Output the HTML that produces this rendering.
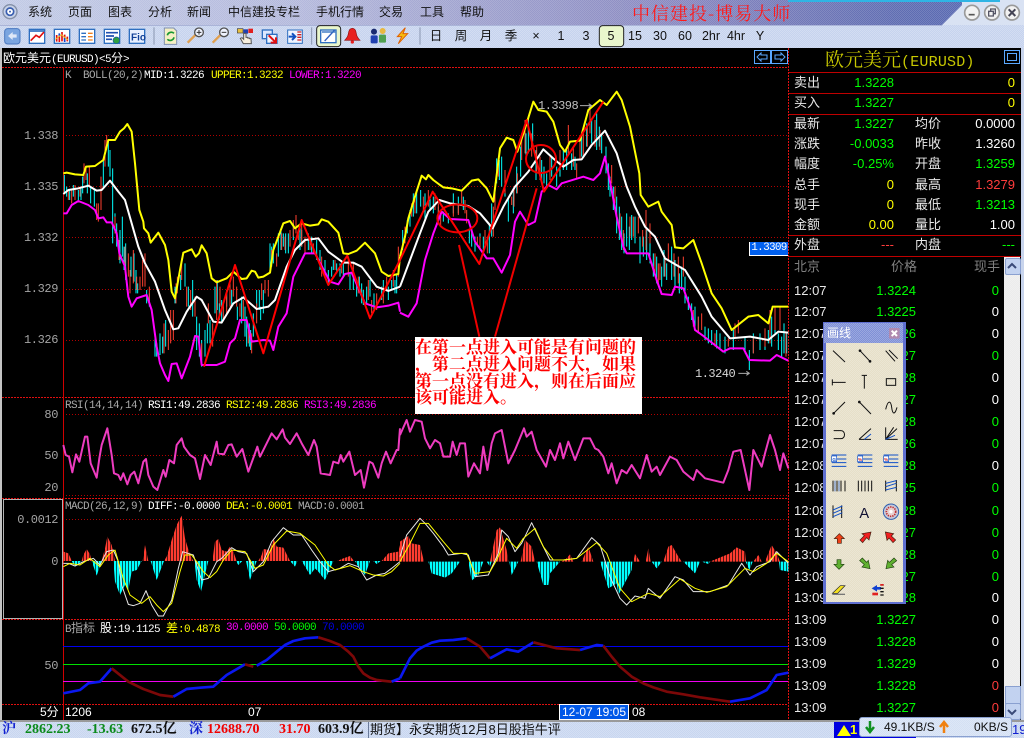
<!DOCTYPE html>
<html><head><meta charset="utf-8"><title>博易大师</title>
<style>
html,body{margin:0;padding:0;background:#000;}
#p{position:relative;width:1024px;height:738px;overflow:hidden;background:#000;font-family:"Liberation Sans","WenQuanYi Zen Hei","Noto Sans CJK SC",sans-serif;}
.a{position:absolute;}
.t{position:absolute;white-space:nowrap;line-height:14px;height:14px;}
.dots{background-image:conic-gradient(rgba(255,255,255,.22) 25%,transparent 0 50%,rgba(255,255,255,.22) 0 75%,transparent 0);background-size:2px 2px;}
.m{font-size:12px;color:#111;}
.tb{font-size:12.5px;color:#111;transform:translateX(-50%);top:29px;}
.l{font-family:"Liberation Mono","WenQuanYi Zen Hei","Noto Sans CJK SC",monospace;font-size:11px;letter-spacing:-.6px;}
.c{font-family:"WenQuanYi Zen Hei","Noto Sans CJK SC",sans-serif;font-size:12px;letter-spacing:0;}
.ax{font-family:"Liberation Mono",monospace;font-size:12px;letter-spacing:-.4px;color:#a4a4a4;text-align:right;width:56px;left:2px;}
.w{color:#fff}.y{color:#ff0}.g{color:#0f0}.pk{color:#f0f}.gr{color:#a8a8a8}.r{color:#ff3c3c}
.f{font-size:13px;color:#e8e8e8;}
.v{font-size:13px;text-align:right;width:70px;}
.st{font-family:"Liberation Serif","Noto Serif CJK SC",serif;font-weight:bold;font-size:14px;top:723px;}
.n{position:absolute;left:415px;white-space:nowrap;color:#ff0000;font-family:"Noto Serif CJK SC",serif;font-weight:bold;font-size:17px;line-height:17px;height:17px;}
</style></head><body><div id="p">

<!-- title bar -->
<div class="a" style="left:0;top:0;width:1024px;height:25px;background:#d9e2f3"></div>
<div class="a dots" style="left:0;top:0;width:962px;height:25px;clip-path:polygon(0 0,100% 0,100% 5px,942px 100%,0 100%);background-color:#8a8fc4;background-image:conic-gradient(rgba(255,255,255,.14) 25%,transparent 0 50%,rgba(255,255,255,.14) 0 75%,transparent 0),linear-gradient(90deg,#c2cbe6 0,#b4b9dc 300px,#9a9ccb 520px,#8686bf 700px,#5f6db2 900px,#5a6ab2 962px);background-size:2px 2px,100% 100%;"></div>
<div class="a" style="left:788px;top:0;width:212px;height:2px;background:#2fb4e4"></div>
<!-- toolbar -->
<div class="a dots" style="left:0;top:25px;width:1024px;height:23px;background-color:#c6d3ee"></div>
<div class="a" style="left:0;top:25px;width:942px;height:1px;background:#aab4d8"></div>

<div class="t m" style="left:28px;top:5px">系统</div>
<div class="t m" style="left:68px;top:5px">页面</div>
<div class="t m" style="left:108px;top:5px">图表</div>
<div class="t m" style="left:148px;top:5px">分析</div>
<div class="t m" style="left:187px;top:5px">新闻</div>
<div class="t m" style="left:228px;top:5px">中信建投专栏</div>
<div class="t m" style="left:316px;top:5px">手机行情</div>
<div class="t m" style="left:379px;top:5px">交易</div>
<div class="t m" style="left:420px;top:5px">工具</div>
<div class="t m" style="left:460px;top:5px">帮助</div>
<div class="t" style="left:632px;top:3px;height:20px;line-height:20px;font-family:'Noto Serif CJK SC',serif;font-size:18px;letter-spacing:1px;color:#ff1a1a">中信建投-博易大师</div>

<svg class="a" style="left:0;top:0" width="1024" height="48" viewBox="0 0 3072 144">
 <circle cx="30" cy="35" r="21" fill="#c8d2e8" stroke="#8490a8" stroke-width="4"/><circle cx="30" cy="35" r="11" fill="#fff" stroke="#3a5fb0" stroke-width="5"/><circle cx="30" cy="35" r="3" fill="#3a5fb0"/>
 <!-- window buttons -->
 <g fill="#f2f2f2" stroke="#9a9a9a" stroke-width="5"><circle cx="2916" cy="38" r="22"/><circle cx="2976" cy="38" r="22"/><circle cx="3036" cy="38" r="22"/></g>
 <path d="M2906 44h18" stroke="#555" stroke-width="5"/><path d="M2966 34h14v14h-14zM2972 34v-7h14v14h-6" fill="none" stroke="#556" stroke-width="4"/><path d="M3026 28l20 20M3046 28l-20 20" stroke="#445" stroke-width="6"/>
 <!-- icon 1 -->
 <rect x="14" y="86" width="46" height="46" rx="9" fill="#7aa5e0" stroke="#4a78c0" stroke-width="3"/><path d="M24 108l14-12v7h12v10H38v7z" fill="#dfe8f7"/>
 <!-- icon 2 -->
 <rect x="88" y="88" width="46" height="42" fill="#fff" stroke="#2e6fc0" stroke-width="4"/><path d="M88 93h46" stroke="#2e6fc0" stroke-width="5"/><path d="M92 122l16-16 10 6 14-16" fill="none" stroke="#e01010" stroke-width="5"/>
 <!-- icon 3 -->
 <rect x="163" y="88" width="46" height="42" fill="#fff" stroke="#2e6fc0" stroke-width="4"/><path d="M170 105v20M178 110v16M186 96v28M194 104v18M202 110v14" stroke="#e01010" stroke-width="5"/><path d="M178 100v10M194 112v14" stroke="#1040d0" stroke-width="5"/><path d="M166 118l18-14 20 16" fill="none" stroke="#f0c020" stroke-width="3"/>
 <!-- icon 4 -->
 <rect x="238" y="88" width="46" height="42" fill="#fff" stroke="#2e6fc0" stroke-width="4"/><path d="M244 100h14M244 110h14M244 120h14" stroke="#2e6fc0" stroke-width="4"/><path d="M264 100h14M264 110h14M264 120h14" stroke="#f08020" stroke-width="4"/>
 <!-- icon 5 -->
 <rect x="313" y="88" width="46" height="42" fill="#fff" stroke="#2e6fc0" stroke-width="4"/><path d="M318 98h36M318 108h24M318 118h18" stroke="#2050b0" stroke-width="5"/><circle cx="349" cy="121" r="10" fill="#30a040" stroke="#1a5aa0" stroke-width="2"/>
 <!-- icon 6 -->
 <rect x="388" y="88" width="46" height="42" fill="#e8f0ff" stroke="#2e6fc0" stroke-width="4"/><text x="393" y="122" font-family="Liberation Sans" font-weight="bold" font-size="30" fill="#104098">Fio</text>
 <path d="M462 82v52M935 82v52M1260 82v52" stroke="#8a96b0" stroke-width="3"/>
 <!-- icon 7 -->
 <path d="M493 84h28l9 9v40h-37z" fill="#f4efc4" stroke="#8090b0" stroke-width="3"/><path d="M502 106a12 12 0 0 1 20-6M522 112a12 12 0 0 1-20 6" fill="none" stroke="#189830" stroke-width="5"/>
 <!-- icon 8,9 -->
 <path d="M563 128l24-24" stroke="#e0a050" stroke-width="7"/><circle cx="597" cy="97" r="13" fill="#f0f4ff" stroke="#505050" stroke-width="4"/><path d="M590 97h14M597 90v14" stroke="#333" stroke-width="3"/>
 <path d="M638 128l24-24" stroke="#e0a050" stroke-width="7"/><circle cx="672" cy="97" r="13" fill="#f0f4ff" stroke="#505050" stroke-width="4"/><path d="M665 97h14" stroke="#333" stroke-width="3"/>
 <!-- icon 10 -->
 <rect x="712" y="86" width="17" height="13" fill="#e8c040" stroke="#444" stroke-width="2"/><rect x="730" y="88" width="14" height="13" fill="#2040b0"/><rect x="745" y="86" width="14" height="13" fill="#e02020"/>
 <path d="M730 131l-9-16 5-2 5 5v-18h7v12h5v2h5v2h5l1 15z" fill="#f8f0e0" stroke="#555" stroke-width="3"/>
 <!-- icon 11 -->
 <rect x="787" y="90" width="30" height="26" fill="#dce8ff" stroke="#2e6fc0" stroke-width="4"/><rect x="800" y="103" width="31" height="27" fill="#eef4ff" stroke="#2e6fc0" stroke-width="4"/><path d="M806 106l22 22M828 112v16h-16" fill="none" stroke="#e01010" stroke-width="6"/>
 <!-- icon 12 -->
 <rect x="863" y="90" width="44" height="40" fill="#eef4ff" stroke="#2e6fc0" stroke-width="3"/><path d="M866 110h16M876 100l10 10-10 10" fill="none" stroke="#1050c0" stroke-width="6"/><path d="M892 96h12M892 104h12M892 112h12M892 120h12" stroke="#d02020" stroke-width="4"/>
 <!-- icon 13 -->
 <rect x="950" y="77" width="72" height="63" rx="10" fill="#e9f6cc" stroke="#222" stroke-width="3"/><rect x="962" y="90" width="46" height="38" fill="#fff" stroke="#2e6fc0" stroke-width="4"/><path d="M974 123l30-33" stroke="#3060c0" stroke-width="4"/><path d="M966 96h40" stroke="#2e6fc0" stroke-width="4"/>
 <!-- icon 14 -->
 <path d="M1057 85c9 0 11 8 12 16 1 10 6 14 11 20h-46c5-6 10-10 11-20 1-8 3-16 12-16z" fill="#e82020" stroke="#901010" stroke-width="2"/><circle cx="1057" cy="126" r="5" fill="#e82020"/>
 <!-- icon 15 -->
 <circle cx="1122" cy="95" r="9" fill="#1a2a70"/><circle cx="1148" cy="93" r="9" fill="#e8b840"/><rect x="1112" y="106" width="21" height="24" rx="4" fill="#2040b0"/><rect x="1137" y="104" width="21" height="24" rx="4" fill="#50a050"/>
 <!-- icon 16 -->
 <path d="M1216 83l-24 27h13l-10 21 28-30h-14z" fill="#f6bc10" stroke="#e06000" stroke-width="3"/>
 <!-- selected 5 -->
 <rect x="1798" y="77" width="73" height="63" rx="10" fill="#e9f6cc" stroke="#222" stroke-width="3"/>
</svg>

<div class="t tb" style="left:436px">日</div><div class="t tb" style="left:461px">周</div><div class="t tb" style="left:486px">月</div><div class="t tb" style="left:511px">季</div><div class="t tb" style="left:536px">×</div><div class="t tb" style="left:561px">1</div><div class="t tb" style="left:586px">3</div><div class="t tb" style="left:611px">5</div><div class="t tb" style="left:635px">15</div><div class="t tb" style="left:660px">30</div><div class="t tb" style="left:685px">60</div><div class="t tb" style="left:711px">2hr</div><div class="t tb" style="left:736px">4hr</div><div class="t tb" style="left:760px">Y</div>

<!-- chart svg -->
<svg class="a" style="left:0;top:48px" width="1024" height="690" viewBox="0 48 1024 690">
<defs>
 <pattern id="pr" patternUnits="userSpaceOnUse" width="9" height="9"><rect width="7" height="9" fill="#ff3c30"/></pattern>
 <pattern id="pc" patternUnits="userSpaceOnUse" width="9" height="9"><rect width="7" height="9" fill="#00ffff"/></pattern>
</defs>
<rect x="0" y="48" width="2" height="674" fill="#c4c4c4"/>
<!-- grid -->
<g stroke="#b00000" stroke-dasharray="1 2" fill="none">
 <path d="M63 135.5H788M63 186.5H788M63 237.5H788M63 289.5H788M63 340.5H788M63 414.5H788M63 455.5H788M63 495.5H788M63 519.5H788"/>
</g>
<g stroke="#e01010" stroke-dasharray="2 1" fill="none">
 <path d="M2 67.5H788M2 397.5H788M2 498.5H788M2 619.5H788M2 704.5H788"/>
 <path d="M788.5 48V720" stroke-dasharray="2 1"/>
 <path d="M63.5 67V720" stroke-dasharray="none" stroke="#d00000"/>
 <path d="M789 72.5H1022M789 93.5H1022M789 114.5H1022M789 235.5H1022M789 256.5H1022" stroke-dasharray="none" stroke="#c00000"/>
</g>
<rect x="3.5" y="499.5" width="59" height="119" fill="none" stroke="#b4b4b4"/>
<!-- arrows buttons -->
<g fill="none" stroke="#5aa8ff"><rect x="754.5" y="50.5" width="16" height="13"/><rect x="771.5" y="50.5" width="16" height="13"/><rect x="1004.5" y="50.5" width="15" height="13"/><rect x="1007.5" y="53.5" width="9" height="7"/><path d="M757 57l4-4v2h6v4h-6v2zM785 57l-4-4v2h-6v4h6v2z"/></g>

<!-- MAIN left half -->
<g transform="translate(0,90) scale(.33333)" fill="none" stroke-linejoin="round">
 <path stroke="#00ffff" stroke-width="3" d="M193 255V310M209 300V330M220 285V320M235 300V330M248 260V310M272 290V340M310 205V290M330 180V260M338 235V460M345 370V430M367 380V500M377 460V570M393 500V560M402 490V575M413 580V610M440 600V640M465 730V800M480 730V795M497 690V770M525 590V640M542 555V600M578 570V680M590 680V780M605 750V830M615 720V800M630 690V760M652 570V660M665 630V700M680 600V650M712 650V690M735 650V740M748 700V770M760 670V740M770 600V650M782 650V690M810 460V540M820 460V520M843 420V480M857 430V490M905 420V470M925 430V480M950 450V510M975 510V560M985 540V580M1000 510V540M1020 520V560M1060 540V600M1078 560V600M1090 600V645M1110 570V620M1145 590V630M1175 570V600M1190 550V610M200 290V320M243 290V330M262 250V310M283 300V350M325 150V230M350 400V470M360 420V520M372 470V540M408 540V610M448 610V650M470 760V800M488 740V790M555 520V590M565 590V650M598 700V800M622 700V760M645 590V670M658 640V690M695 600V650M725 620V700M740 680V770M752 720V780M778 600V660M790 600V670M815 470V530M835 430V500M850 430V470M865 430V490M880 400V450M900 410V480M935 440V490M960 480V540M995 530V560M1010 520V550M1030 520V560M1050 550V600M1070 570V620M1085 580V640M1100 590V640M1122 610V660M1150 570V620M1165 590V630M1185 570V610"/>
 <path stroke="#ff4030" stroke-width="3" d="M215 300V340M225 285V330M252 220V280M258 230V270M295 340V395M315 150V230M320 135V180M345 380V430M357 450V510M385 490V560M400 480V580M420 560V600M435 490V590M492 700V790M505 720V780M520 660V750M532 560V610M545 505V570M572 600V660M605 760V810M638 700V770M650 570V690M670 640V690M690 570V650M700 560V620M720 640V680M745 720V760M770 640V700M795 570V610M805 570V620M830 490V530M855 440V480M888 375V430M895 420V450M915 440V490M940 460V490M1005 510V540M1045 500V560M1105 570V630M1130 610V660M1160 560V600M1195 470V560M205 300V330M240 290V320M268 230V290M290 340V390M303 260V360M375 470V530M390 540V610M410 560V600M428 510V590M448 590V640M512 660V760M528 580V640M560 590V650M585 620V680M625 640V700M660 590V650M680 610V670M710 590V650M730 630V690M755 730V790M785 580V630M815 480V520M845 430V480M870 420V470M880 390V440M905 400V470M930 440V480M965 500V560M1025 510V550M1060 520V560M1075 560V610M1115 630V670M1150 590V640M1180 540V590"/>
 <polyline stroke="#ffff00" stroke-width="6" points="190,250 200,248 225,253 250,255 258,230 285,228 310,210 325,150 345,150 360,125 372,115 382,102 395,125 405,220 418,360 430,395 432,415 445,430 452,458 475,428 495,465 505,510 515,605 525,625 540,540 550,488 575,478 587,500 597,490 605,466 620,490 635,565 650,577 680,565 700,545 725,567 740,565 755,542 765,545 775,563 790,560 810,548 820,480 850,400 870,393 885,415 905,400 930,407 955,403 965,388 985,395 1015,428 1030,490 1045,492 1070,482 1095,458 1125,490 1145,545 1165,558 1195,552 1200,500"/>
 <polyline stroke="#ff00ff" stroke-width="6" points="190,370 200,370 215,345 235,333 265,345 285,360 295,385 310,382 320,397 335,397 350,430 358,490 375,530 385,620 395,650 410,625 440,615 455,660 470,770 480,820 495,855 505,873 515,822 530,820 545,865 570,800 585,738 595,740 605,825 650,825 675,815 690,760 705,745 720,690 740,690 755,755 790,750 810,752 820,780 835,710 860,670 880,560 915,490 945,490 990,575 1015,583 1035,552 1055,548 1095,640 1130,652 1165,647 1195,638 1200,665"/>
 <polyline stroke="#ffffff" stroke-width="6" points="190,312 205,300 235,295 265,287 290,302 305,300 330,272 355,305 375,330 395,400 415,470 435,520 465,575 495,660 520,718 535,715 560,665 590,620 605,630 640,695 665,698 700,640 730,622 770,657 805,650 825,630 860,530 885,480 915,450 955,445 985,485 1030,518 1060,518 1085,530 1130,590 1165,603 1200,590"/>
 <polyline stroke="#ff0000" stroke-width="6" points="612,830 705,525 790,790 905,390 985,585 1042,497 1110,685 1200,510"/>
</g>
<!-- MAIN right half -->
<g transform="translate(400,90) scale(.33333)" fill="none" stroke-linejoin="round">
 <path stroke="#00ffff" stroke-width="3" d="M8 420V480M30 360V410M50 300V370M62 300V350M75 310V390M100 320V370M130 365V395M145 370V400M160 310V370M190 320V360M208 420V460M225 440V485M250 440V495M268 400V490M290 205V280M305 200V290M325 320V395M350 230V310M385 80V190M398 100V155M425 210V270M440 250V290M470 230V290M490 175V240M515 190V240M560 100V170M590 70V180M605 130V190M618 170V250M630 260V320M650 320V430M665 380V480M680 370V470M695 375V450M720 440V520M740 420V510M770 500V580M800 520V570M815 470V570M845 530V600M865 620V660M885 650V710M915 710V750M935 720V765M960 730V780M1035 740V790M1048 780V840M1080 730V780M1115 680V770M1125 690V730M1145 740V800M1160 730V790M22 390V430M40 310V380M90 320V360M115 350V390M175 320V370M215 410V470M240 430V480M275 340V440M298 210V270M315 250V320M340 300V370M362 170V260M378 130V200M408 180V270M432 230V280M455 200V260M480 190V260M500 180V240M525 200V240M545 140V200M575 90V160M598 110V170M625 220V300M640 290V360M658 350V450M672 430V490M688 410V480M705 380V460M730 440V500M750 440V520M760 490V560M785 530V590M792 480V560M825 510V590M838 550V610M855 560V640M875 640V690M895 680V730M925 715V760M950 720V775M975 740V790M1000 720V780M1060 730V790M1095 730V780M1105 720V760M1135 730V780M1152 700V790"/>
 <path stroke="#ff4030" stroke-width="3" d="M15 410V460M45 310V370M85 300V350M105 310V360M122 370V410M160 340V380M175 345V375M185 305V340M195 330V370M240 440V480M262 440V490M280 350V440M295 215V260M315 240V310M335 320V345M352 250V310M375 90V190M410 170V250M450 200V270M505 105V190M530 220V265M550 130V200M570 50V130M585 90V170M635 225V280M670 420V480M690 380V440M715 380V430M738 360V480M765 490V560M780 520V570M805 460V515M835 500V580M905 670V720M985 745V770M1015 690V730M1095 715V770M1110 660V760M1140 650V720M35 340V380M70 320V360M115 340V380M200 360V400M232 440V470M255 420V470M285 280V360M342 290V350M365 130V210M395 130V200M420 200V270M480 180V240M520 170V230M540 150V210M562 110V170M600 120V180M645 290V340M660 370V430M700 380V440M728 420V470M750 400V460M775 520V580M795 500V560M822 490V560M850 500V560M880 660V710M895 680V730M945 730V770M1005 700V745M1060 745V790M1125 650V720M1158 730V800"/>
 <polyline stroke="#ffff00" stroke-width="6" points="0,500 15,440 25,385 48,310 65,257 78,268 85,255 100,270 120,285 130,292 155,295 185,302 215,272 235,268 260,295 280,335 300,175 320,143 340,150 352,185 372,125 400,35 415,60 440,65 460,95 480,165 495,185 510,155 540,152 565,60 600,30 620,45 650,5 665,30 690,110 718,250 722,315 745,350 775,335 785,365 815,405 825,472 850,475 880,450 905,520 935,610 965,655 995,720 1045,680 1075,675 1105,700 1118,650 1165,650"/>
 <polyline stroke="#ff00ff" stroke-width="6" points="0,668 25,680 50,640 75,510 100,430 125,365 150,387 205,390 225,455 260,505 280,505 305,548 330,495 345,395 360,365 385,405 405,395 425,305 445,285 470,298 485,280 550,260 580,270 600,250 615,200 630,275 650,380 670,470 680,490 745,490 770,570 785,612 815,615 825,590 850,595 875,665 885,720 910,738 970,785 990,775 1030,775 1048,810 1110,812 1130,795 1165,812"/>
 <polyline stroke="#ffffff" stroke-width="6" points="0,590 30,510 60,430 85,365 118,330 150,340 205,348 240,370 278,415 310,350 345,290 385,245 430,178 465,210 490,230 520,210 545,208 575,165 615,122 650,190 680,290 705,350 735,410 765,440 795,505 855,540 905,620 935,680 990,745 1050,740 1105,750 1135,725 1165,728"/>
 <polyline stroke="#ff0000" stroke-width="6" points="0,510 98,305 238,522 380,90 432,305 610,35"/>
 <ellipse cx="172" cy="385" rx="60" ry="42" stroke="#f00000" stroke-width="6"/>
 <ellipse cx="423" cy="207" rx="45" ry="42" stroke="#f00000" stroke-width="6"/>
 <path d="M177 465L238 740M410 295L285 740" stroke="#f00000" stroke-width="6"/>
 <path d="M540 47H575M566 41l9 6-9 6M1015 850H1048M1039 844l9 6-9 6" stroke="#aaa" stroke-width="3"/>
</g>
<!-- RSI -->
<g transform="translate(0,395) scale(.33333)" fill="none" stroke-linejoin="round">
 <polyline stroke="#ee3cc0" stroke-width="6" points="190,150 197,180 207,185 217,232 228,178 238,200 255,125 262,125 272,205 290,248 298,190 305,150 322,100 335,180 342,235 355,240 362,255 370,235 382,268 392,240 403,230 415,265 430,200 438,192 445,240 460,275 472,285 490,225 497,245 508,195 522,205 530,150 545,130 552,155 570,180 585,190 600,252 615,180 632,210 650,140 655,175 672,178 685,150 695,148 710,185 727,162 745,230 765,175 772,155 780,185 795,155 815,115 830,133 848,103 855,128 870,147 890,115 905,145 925,180 942,135 950,155 962,235 990,240 1000,200 1015,205 1022,180 1030,200 1048,170 1065,240 1082,225 1092,278 1108,200 1118,205 1135,248 1145,205 1158,170 1172,205 1190,165 1195,165 1200,100"/>
</g>
<g transform="translate(400,410) scale(.33333)" fill="none" stroke-linejoin="round">
 <polyline stroke="#ee3cc0" stroke-width="6" points="0,75 20,30 30,65 45,30 65,35 75,85 90,115 105,90 120,100 130,140 150,140 158,95 170,135 180,100 195,100 205,200 222,160 240,190 250,110 262,180 275,100 285,70 305,60 325,160 345,120 372,55 380,80 395,65 410,120 438,170 450,120 465,150 480,100 490,145 505,95 525,150 550,85 570,85 585,115 595,120 610,140 625,190 635,160 650,220 665,180 680,190 695,165 720,205 740,135 755,185 770,170 780,195 810,140 830,150 850,185 880,210 890,180 915,205 970,218 985,180 1000,125 1022,120 1048,240 1060,120 1085,170 1095,130 1110,75 1125,120 1140,180 1150,130 1165,175"/>
</g>
<!-- MACD left -->
<g transform="translate(0,395) scale(.33333)" stroke="none">
 <g fill="url(#pr)">
  <polygon points="190,498 190,470 205,475 212,490 215,498"/><polygon points="245,498 250,480 260,462 270,478 275,498"/><polygon points="305,498 315,460 322,425 335,450 345,498"/><polygon points="428,498 435,450 445,498"/><polygon points="492,498 500,485 515,435 530,390 545,362 555,430 570,480 580,498"/><polygon points="637,498 645,440 655,432 665,465 680,470 690,455 700,470 710,498"/><polygon points="775,498 785,480 790,462 810,465 820,430 830,455 850,458 870,498"/><polygon points="1012,498 1030,490 1050,483 1062,498"/><polygon points="1145,498 1165,475 1195,470 1200,450 1200,498"/>
 </g>
 <g fill="url(#pc)">
  <polygon points="215,498 225,515 245,498"/><polygon points="275,498 290,542 305,498"/><polygon points="340,498 345,560 360,600 375,570 385,585 395,530 410,525 425,498"/><polygon points="452,498 470,555 492,498"/><polygon points="583,498 590,555 603,590 612,550 625,498"/><polygon points="708,498 715,510 727,498"/><polygon points="738,498 750,555 770,498"/><polygon points="870,498 885,515 892,498"/><polygon points="905,498 930,540 945,520 955,530 975,555 1000,498"/><polygon points="1065,498 1075,515 1095,540 1110,498"/><polygon points="1120,498 1130,507 1142,498"/>
 </g>
 <g fill="none" stroke-width="3" stroke-linejoin="round">
  <polyline stroke="#e8e8e8" points="190,505 205,505 225,513 250,500 280,490 300,510 320,470 340,465 355,500 365,570 385,628 400,632 420,625 438,587 455,630 475,663 490,663 515,615 535,520 548,470 580,480 605,555 625,550 650,500 665,490 695,458 715,470 740,475 760,530 790,500 815,440 850,398 880,420 905,420 935,465 960,500 985,530 1020,520 1045,505 1075,515 1100,555 1130,540 1155,535 1175,520 1200,500"/>
  <polyline stroke="#ffff00" points="190,515 210,505 240,510 270,490 300,515 325,480 345,465 370,550 390,600 425,625 450,605 470,630 490,650 515,625 540,530 555,480 575,480 590,500 610,530 630,548 650,530 670,495 695,465 735,470 765,520 790,510 820,450 860,408 900,415 945,450 985,510 1005,525 1050,512 1090,530 1120,540 1150,543 1175,530 1200,505"/>
 </g>
</g>
<!-- MACD right -->
<g transform="translate(400,410) scale(.33333)" stroke="none">
 <g fill="url(#pr)">
  <polygon points="0,455 0,395 25,378 35,400 60,405 72,455"/><polygon points="270,455 290,360 300,352 320,420 325,455"/><polygon points="362,455 375,390 395,410 405,455"/><polygon points="483,455 495,450 510,433 520,455"/><polygon points="545,455 565,410 580,455"/><polygon points="700,455 705,432 720,455"/><polygon points="737,455 745,415 752,455"/><polygon points="790,455 805,410 815,405 835,440 845,455"/><polygon points="930,455 990,430 1010,412 1035,425 1038,455"/><polygon points="1060,455 1075,435 1085,455"/><polygon points="1095,455 1115,405 1130,430 1140,455"/>
 </g>
 <g fill="url(#pc)">
  <polygon points="85,455 95,490 135,503 155,490 180,455"/><polygon points="205,455 215,512 235,495 250,455"/><polygon points="260,455 270,470 275,455"/><polygon points="328,455 335,495 355,455"/><polygon points="410,455 430,525 445,525 450,490 480,455"/><polygon points="600,455 625,535 650,520 655,555 695,480 697,455"/><polygon points="755,455 770,475 785,455"/><polygon points="850,455 885,490 900,455"/><polygon points="905,455 925,462 930,455"/><polygon points="1037,455 1048,480 1058,455"/><polygon points="1137,455 1140,480 1165,485 1165,455"/>
 </g>
 <g fill="none" stroke-width="3" stroke-linejoin="round">
  <polyline stroke="#e8e8e8" points="0,440 20,375 40,350 60,325 75,340 100,370 130,410 145,435 185,430 205,435 225,500 265,495 295,430 305,360 325,380 345,425 365,400 395,338 420,390 450,450 490,450 530,445 575,383 600,405 630,500 660,565 680,585 705,558 735,565 745,535 780,565 825,500 850,510 880,545 930,545 985,525 1025,460 1050,495 1070,470 1110,455 1130,425 1165,460"/>
  <polyline stroke="#ffff00" points="0,455 30,400 60,340 85,340 130,395 160,430 200,430 225,490 270,485 290,450 320,385 350,415 370,385 405,355 430,410 460,450 490,450 530,445 590,398 620,430 660,535 695,575 745,550 780,560 840,507 885,535 920,547 980,530 1035,475 1060,485 1100,460 1130,430 1165,455"/>
 </g>
</g>
<!-- B lines -->
<path d="M63 646.5H788" stroke="#0000f0"/><path d="M63 664.5H788" stroke="#00e000"/><path d="M63 681.5H788" stroke="#f000f0"/>
<g transform="translate(0,395) scale(.33333)" fill="none" stroke-width="8" stroke-linejoin="round">
 <polyline stroke="#0a18f0" points="190,895 240,885 265,865 300,860 335,820"/>
 <polyline stroke="#7c0808" points="335,820 385,860 430,882 480,900 520,905"/>
 <polyline stroke="#0a18f0" points="520,905 560,882 600,878 640,875 680,840 735,808"/>
 <polyline stroke="#7c0808" points="735,808 760,815"/>
 <polyline stroke="#0a18f0" points="770,812 800,795 830,770 855,750 880,738 915,730 955,727"/>
 <polyline stroke="#7c0808" points="955,727 990,738 1020,750 1045,770 1060,785 1075,815 1090,835 1110,848 1130,855 1175,860"/>
 <polyline stroke="#0a18f0" points="1175,860 1200,850"/>
</g>
<g transform="translate(400,410) scale(.33333)" fill="none" stroke-width="8" stroke-linejoin="round">
 <polyline stroke="#0a18f0" points="0,805 15,775 30,745 50,722 70,710 95,698 120,692 160,690 200,685"/>
 <polyline stroke="#7c0808" points="200,685 240,710 270,745"/>
 <polyline stroke="#0a18f0" points="270,745 320,718 355,725 400,697"/>
 <polyline stroke="#7c0808" points="400,697 470,715 540,720"/>
 <polyline stroke="#0a18f0" points="540,720 590,705 610,707"/>
 <polyline stroke="#7c0808" points="610,707 635,740 660,770 695,800 730,820 760,832 800,845 850,853 900,862 990,875"/>
 <polyline stroke="#0a18f0" points="990,875 1050,865 1100,840 1130,795 1165,788"/>
</g>
</svg>

<!-- right strip -->
<div class="a" style="left:1021px;top:48px;width:3px;height:674px;background:#c8d4ec"></div>
<!-- header labels -->
<div class="t l w" style="left:3px;top:51px"><span class="c">欧元美元</span>(EURUSD)&lt;5<span class="c">分</span>&gt;</div>
<div class="t l gr" style="left:65px;top:69px">K&nbsp;&nbsp;BOLL(20,2)</div><div class="t l w" style="left:144px;top:69px">MID:1.3226</div><div class="t l y" style="left:211px;top:69px">UPPER:1.3232</div><div class="t l pk" style="left:289px;top:69px">LOWER:1.3220</div>
<div class="t l gr" style="left:65px;top:399px">RSI(14,14,14)</div><div class="t l w" style="left:148px;top:399px">RSI1:49.2836</div><div class="t l y" style="left:226px;top:399px">RSI2:49.2836</div><div class="t l pk" style="left:304px;top:399px">RSI3:49.2836</div>
<div class="t l gr" style="left:65px;top:500px">MACD(26,12,9)</div><div class="t l w" style="left:148px;top:500px">DIFF:-0.0000</div><div class="t l y" style="left:226px;top:500px">DEA:-0.0001</div><div class="t l gr" style="left:298px;top:500px">MACD:0.0001</div>
<div class="t l gr" style="left:65px;top:621px">B<span class="c">指标</span></div><div class="t l w" style="left:100px;top:621px"><span class="c">股</span>:19.1125</div><div class="t l y" style="left:166px;top:621px"><span class="c">差</span>:0.4878</div><div class="t l pk" style="left:226px;top:621px">30.0000</div><div class="t l g" style="left:274px;top:621px">50.0000</div><div class="t l" style="left:322px;top:621px;color:#0000e8">70.0000</div>

<div class="t ax" style="top:129px">1.338</div><div class="t ax" style="top:180px">1.335</div><div class="t ax" style="top:231px">1.332</div><div class="t ax" style="top:282px">1.329</div><div class="t ax" style="top:333px">1.326</div>
<div class="t ax" style="top:408px">80</div><div class="t ax" style="top:449px">50</div><div class="t ax" style="top:481px">20</div>
<div class="t ax" style="top:513px">0.0012</div><div class="t ax" style="top:555px">0</div><div class="t ax" style="top:659px">50</div>

<div class="t" style="left:538px;top:99px;font:12px/14px 'Liberation Mono',monospace;letter-spacing:-.5px;color:#c0c0c0">1.3398</div>
<div class="t" style="left:695px;top:367px;font:12px/14px 'Liberation Mono',monospace;letter-spacing:-.5px;color:#d8d8d8">1.3240</div>
<div class="t" style="left:749px;top:242px;width:38px;height:13px;line-height:13px;background:#0060f0;border:1px solid #fff;border-width:0 0 1px 1px;font-family:'Liberation Mono',monospace;font-size:11px;letter-spacing:-.7px;color:#fff;text-align:center">1.3309</div>

<!-- note box -->
<div class="a" style="left:415px;top:337px;width:227px;height:77px;background:#fff"></div>
<div class="n" style="top:337px">在第一点进入可能是有问题的</div>
<div class="n" style="top:354px">，第二点进入问题不大，如果</div>
<div class="n" style="top:371px">第一点没有进入，则在后面应</div>
<div class="n" style="top:387px">该可能进入。</div>

<!-- time axis -->
<div class="t w" style="left:40px;top:705px;font-size:12px">5分</div>
<div class="t w" style="left:65px;top:705px;font-size:12px">1206</div>
<div class="t w" style="left:248px;top:705px;font-size:12px">07</div>
<div class="t" style="left:559px;top:704px;width:68px;height:14px;background:#0058e8;border:1px solid #fff;color:#fff;font-size:12px;line-height:15px;text-align:center">12-07 19:05</div>
<div class="t w" style="left:632px;top:705px;font-size:12px">08</div>

<!-- right panel -->
<div class="t" style="left:825px;top:48px;height:22px;line-height:22px;color:#c8c800;font-family:'Noto Serif CJK SC',serif;font-size:19px">欧元美元<span style="font-family:'Liberation Mono',monospace;font-size:15px;letter-spacing:.2px">(EURUSD)</span></div>

<div class="t f" style="left:794px;top:76px">卖出</div><div class="t v g" style="left:824px;top:76px">1.3228</div><div class="t v y" style="left:945px;top:76px">0</div>
<div class="t f" style="left:794px;top:96px">买入</div><div class="t v g" style="left:824px;top:96px">1.3227</div><div class="t v y" style="left:945px;top:96px">0</div>
<div class="t f" style="left:794px;top:117px">最新</div><div class="t v g" style="left:824px;top:117px">1.3227</div><div class="t f" style="left:915px;top:117px">均价</div><div class="t v w" style="left:945px;top:117px">0.0000</div>
<div class="t f" style="left:794px;top:137px">涨跌</div><div class="t v g" style="left:824px;top:137px">-0.0033</div><div class="t f" style="left:915px;top:137px">昨收</div><div class="t v w" style="left:945px;top:137px">1.3260</div>
<div class="t f" style="left:794px;top:157px">幅度</div><div class="t v g" style="left:824px;top:157px">-0.25%</div><div class="t f" style="left:915px;top:157px">开盘</div><div class="t v g" style="left:945px;top:157px">1.3259</div>
<div class="t f" style="left:794px;top:178px">总手</div><div class="t v y" style="left:824px;top:178px">0</div><div class="t f" style="left:915px;top:178px">最高</div><div class="t v r" style="left:945px;top:178px">1.3279</div>
<div class="t f" style="left:794px;top:198px">现手</div><div class="t v y" style="left:824px;top:198px">0</div><div class="t f" style="left:915px;top:198px">最低</div><div class="t v g" style="left:945px;top:198px">1.3213</div>
<div class="t f" style="left:794px;top:218px">金额</div><div class="t v y" style="left:824px;top:218px">0.00</div><div class="t f" style="left:915px;top:218px">量比</div><div class="t v w" style="left:945px;top:218px">1.00</div>
<div class="t f" style="left:794px;top:238px">外盘</div><div class="t v r" style="left:824px;top:238px">---</div><div class="t f" style="left:915px;top:238px">内盘</div><div class="t v g" style="left:945px;top:238px">---</div>

<div class="t f" style="left:794px;top:260px;color:#808080">北京</div><div class="t f" style="left:891px;top:260px;color:#808080">价格</div><div class="t f" style="left:974px;top:260px;color:#808080">现手</div>

<div class="t f" style="left:794px;top:284px">12:07</div><div class="t v g" style="left:846px;top:284px">1.3224</div><div class="t v g" style="left:929px;top:284px">0</div>
<div class="t f" style="left:794px;top:305px">12:07</div><div class="t v g" style="left:846px;top:305px">1.3225</div><div class="t v w" style="left:929px;top:305px">0</div>
<div class="t f" style="left:794px;top:327px">12:07</div><div class="t v g" style="left:846px;top:327px">1.3226</div><div class="t v w" style="left:929px;top:327px">0</div>
<div class="t f" style="left:794px;top:349px">12:07</div><div class="t v g" style="left:846px;top:349px">1.3227</div><div class="t v g" style="left:929px;top:349px">0</div>
<div class="t f" style="left:794px;top:371px">12:07</div><div class="t v g" style="left:846px;top:371px">1.3228</div><div class="t v w" style="left:929px;top:371px">0</div>
<div class="t f" style="left:794px;top:393px">12:07</div><div class="t v g" style="left:846px;top:393px">1.3227</div><div class="t v w" style="left:929px;top:393px">0</div>
<div class="t f" style="left:794px;top:415px">12:07</div><div class="t v g" style="left:846px;top:415px">1.3228</div><div class="t v g" style="left:929px;top:415px">0</div>
<div class="t f" style="left:794px;top:437px">12:07</div><div class="t v g" style="left:846px;top:437px">1.3226</div><div class="t v g" style="left:929px;top:437px">0</div>
<div class="t f" style="left:794px;top:459px">12:08</div><div class="t v g" style="left:846px;top:459px">1.3228</div><div class="t v w" style="left:929px;top:459px">0</div>
<div class="t f" style="left:794px;top:481px">12:08</div><div class="t v g" style="left:846px;top:481px">1.3225</div><div class="t v g" style="left:929px;top:481px">0</div>
<div class="t f" style="left:794px;top:504px">12:08</div><div class="t v g" style="left:846px;top:504px">1.3228</div><div class="t v g" style="left:929px;top:504px">0</div>
<div class="t f" style="left:794px;top:526px">12:08</div><div class="t v g" style="left:846px;top:526px">1.3227</div><div class="t v g" style="left:929px;top:526px">0</div>
<div class="t f" style="left:794px;top:548px">13:08</div><div class="t v g" style="left:846px;top:548px">1.3228</div><div class="t v g" style="left:929px;top:548px">0</div>
<div class="t f" style="left:794px;top:570px">13:08</div><div class="t v g" style="left:846px;top:570px">1.3227</div><div class="t v g" style="left:929px;top:570px">0</div>
<div class="t f" style="left:794px;top:591px">13:09</div><div class="t v g" style="left:846px;top:591px">1.3228</div><div class="t v w" style="left:929px;top:591px">0</div>
<div class="t f" style="left:794px;top:613px">13:09</div><div class="t v g" style="left:846px;top:613px">1.3227</div><div class="t v w" style="left:929px;top:613px">0</div>
<div class="t f" style="left:794px;top:635px">13:09</div><div class="t v g" style="left:846px;top:635px">1.3228</div><div class="t v w" style="left:929px;top:635px">0</div>
<div class="t f" style="left:794px;top:657px">13:09</div><div class="t v g" style="left:846px;top:657px">1.3229</div><div class="t v w" style="left:929px;top:657px">0</div>
<div class="t f" style="left:794px;top:679px">13:09</div><div class="t v g" style="left:846px;top:679px">1.3228</div><div class="t v r" style="left:929px;top:679px">0</div>
<div class="t f" style="left:794px;top:701px">13:09</div><div class="t v g" style="left:846px;top:701px">1.3227</div><div class="t v r" style="left:929px;top:701px">0</div>

<!-- scrollbar -->
<div class="a dots" style="left:1004px;top:257px;width:16px;height:463px;background-color:#ececec"></div>
<div class="a" style="left:1005px;top:258px;width:14px;height:15px;background:#c2d2f0;border:1px solid #8aa0d0;border-radius:2px"></div>
<div class="a" style="left:1005px;top:686px;width:14px;height:16px;background:#c2d2f0;border:1px solid #8aa0d0"></div>
<div class="a" style="left:1005px;top:703px;width:14px;height:15px;background:#c2d2f0;border:1px solid #8aa0d0;border-radius:2px"></div>
<svg class="a" style="left:1004px;top:257px" width="16" height="463" viewBox="0 0 16 463"><path d="M4 11l4-4 4 4" fill="none" stroke="#3a4a78" stroke-width="2"/><path d="M4 453l4 4 4-4" fill="none" stroke="#3a4a78" stroke-width="2"/></svg>

<!-- palette -->
<div class="a" style="left:823px;top:322px;width:83px;height:282px;background:#5f6fd0"></div>
<div class="a dots" style="left:824px;top:323px;width:79px;height:20px;background-color:#7f90d6"></div>
<div class="a dots" style="left:826px;top:343px;width:77px;height:259px;background-color:#e6dfc8"></div>
<div class="t" style="left:827px;top:326px;color:#fff;font-size:12px">画线</div>
<svg class="a" style="left:815px;top:320px" width="100" height="290" viewBox="0 0 300 870">
 <rect x="222" y="24" width="32" height="32" rx="3" fill="#b08ab0"/><path d="M230 32l16 16M246 32l-16 16" stroke="#fff" stroke-width="6"/>
 <g stroke="#111" stroke-width="3" fill="none">
  <path d="M54 92L90 126"/><path d="M135 92L165 124"/><path d="M212 92L240 124M222 90L248 116"/>
  <path d="M52 187H92M52 178V196"/><path d="M148 166V206M140 166H156"/><rect x="214" y="176" width="28" height="20"/>
  <path d="M56 280L90 246"/><path d="M133 246L168 282"/><path d="M212 268C220 235 228 245 230 262S238 290 246 262"/>
  <path d="M56 332H78C92 332 92 356 78 356H56"/><path d="M132 358L168 326M132 358H168"/>
  <path d="M212 322V358H248M212 358L246 326M212 358L236 322" stroke-width="3"/>
  <path d="M54 482V514M66 482V514M78 482V514M90 482V514"/><path d="M130 482V514M140 482V514M150 482V514M160 482V514M170 482V514"/><path d="M212 482V514M244 480V514"/>
  <path d="M54 556V594M80 556V594"/>
 </g>
 <g fill="#111"><circle cx="135" cy="92" r="4"/><circle cx="165" cy="124" r="4"/><circle cx="56" cy="280" r="4"/><circle cx="133" cy="246" r="4"/></g>
 <g stroke="#1050c8" fill="none">
  <path d="M148 358L168 342M212 358L240 346" stroke-width="3"/>
  <path d="M50 405H94M50 417H94M50 428H94M50 439H94" stroke-width="3"/><path d="M128 405H172M128 417H172M128 428H172M128 439H172" stroke-width="3"/><path d="M206 405H250M206 417H250M206 428H250M206 439H250" stroke-width="3"/>
  <path d="M60 482V514M72 482V514" stroke-width="2"/><path d="M212 500L244 490M212 510L244 502M212 490L244 482" stroke-width="3"/>
  <path d="M54 590L82 578M54 580L82 568M54 570L82 558" stroke-width="3"/>
 </g>
 <g font-family="Liberation Sans" font-size="14" font-weight="bold"><rect x="50" y="408" width="15" height="17" fill="#fff" stroke="#1050c8" stroke-width="2"/><text x="52" y="423" fill="#1050c8">G</text><rect x="128" y="408" width="15" height="17" fill="#fff" stroke="#1050c8" stroke-width="2"/><text x="129" y="423" fill="#d02020">%</text><rect x="206" y="408" width="15" height="17" fill="#fff" stroke="#1050c8" stroke-width="2"/><text x="207" y="423" fill="#d02020">%</text></g>
 <text x="133" y="594" font-family="Liberation Sans" font-size="44" fill="#113">A</text>
 <circle cx="228" cy="575" r="23" fill="#c8c8d8" stroke="#3060b0" stroke-width="3"/><circle cx="228" cy="575" r="14" fill="#e8d0d0" stroke="#c03030" stroke-width="5" stroke-dasharray="4 3"/><circle cx="228" cy="575" r="5" fill="#fff"/>
 <g stroke="#402010" stroke-width="2">
  <path d="M73 641L88 656H79V670H67V656H58Z" fill="#ef4016"/>
  <path d="M168 636L162 660L155 653L143 668L135 660L148 647L141 641Z" fill="#f02020"/>
  <path d="M211 636L236 641L229 648L242 660L234 668L222 654L216 661Z" fill="#f02020"/>
 </g>
 <g stroke="#204010" stroke-width="2">
  <path d="M72 748L87 733H78V719H66V733H57Z" fill="#60b030"/>
  <path d="M165 746L141 741L148 734L134 722L142 714L155 727L160 721Z" fill="#60b030"/>
  <path d="M213 746L237 741L230 734L245 722L237 714L223 727L218 721Z" fill="#60b030"/>
 </g>
 <path d="M52 820L76 797H90L68 820Z" fill="#f4e020" stroke="#222" stroke-width="2"/><path d="M52 823H90" stroke="#777" stroke-width="4"/>
 <path d="M170 805L186 795V801H198V809H186V815Z" fill="#1040d0"/><path d="M196 795H206M196 805H206M196 815H206M196 825H206" stroke="#111" stroke-width="4"/><rect x="172" y="818" width="17" height="8" fill="#e02020"/><rect x="196" y="792" width="10" height="5" fill="#e02020"/>
</svg>

<!-- bottom -->
<div class="a" style="left:0;top:720px;width:1024px;height:2px;background:#9a9a9a"></div>
<div class="a dots" style="left:0;top:722px;width:1024px;height:16px;background-color:#c8d6f0"></div>
<div class="t st" style="left:2px;color:#1020d0">沪</div>
<div class="t st" style="left:25px;color:#0a8a1a">2862.23</div>
<div class="t st" style="left:87px;color:#0a8a1a">-13.63</div>
<div class="t st" style="left:131px;color:#111">672.5亿</div>
<div class="t st" style="left:189px;color:#1020d0">深</div>
<div class="t st" style="left:207px;color:#f00000">12688.70</div>
<div class="t st" style="left:279px;color:#f00000">31.70</div>
<div class="t st" style="left:318px;color:#111">603.9亿</div>
<div class="a" style="left:368px;top:722px;width:1px;height:16px;background:#6a7a9a"></div>
<div class="t" style="left:370px;top:723px;font-size:13px;color:#111">期货】永安期货12月8日股指牛评</div>
<div class="a" style="left:834px;top:722px;width:82px;height:16px;background:#0000e0"></div>
<svg class="a" style="left:834px;top:722px" width="26" height="16" viewBox="0 0 26 16"><path d="M3 14L10 3L17 14Z" fill="#ff0"/></svg>
<div class="t" style="left:850px;top:723px;font-weight:bold;font-size:13px;color:#ff0">1</div>
<div class="a dots" style="left:859px;top:717px;width:151px;height:18px;background-color:#d4e0f4;border:1px solid #8aa0d0;border-radius:3px"></div>
<svg class="a" style="left:864px;top:718px" width="90" height="18" viewBox="0 0 90 18"><path d="M6 3V13M2 9L6 14L10 9" fill="none" stroke="#109020" stroke-width="2.5"/><path d="M80 15V5M76 9L80 4L84 9" fill="none" stroke="#f08010" stroke-width="2.5"/></svg>
<div class="t" style="left:884px;top:720px;font-size:12px;color:#111">49.1KB/S</div>
<div class="t" style="left:974px;top:720px;font-size:12px;color:#111">0KB/S</div>
<div class="t" style="left:1012px;top:723px;font-size:13px;color:#1020d0">19</div>
</div></body></html>
